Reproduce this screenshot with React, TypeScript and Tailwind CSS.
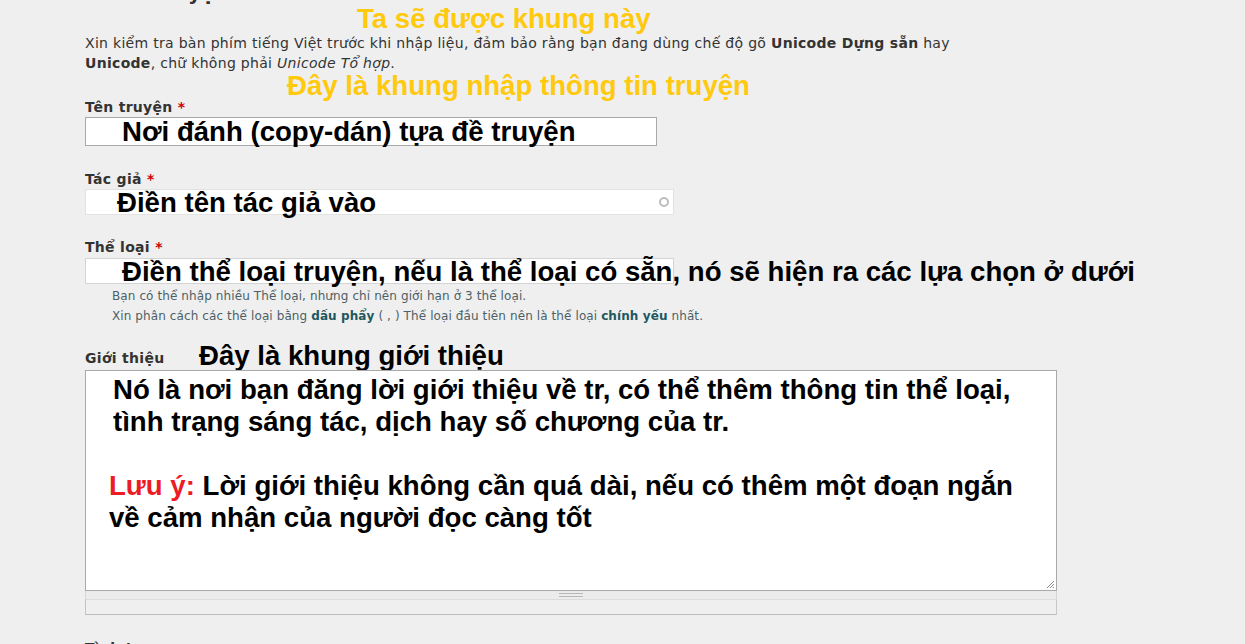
export default function App() {
  const note = "font-['Liberation_Sans',Arial,sans-serif] font-bold text-[27.6px] leading-none";
  const label = "block h-[18px] text-[14px] font-bold leading-[18px] tracking-[0.3px]";

  return (
    <div className="min-h-screen w-full overflow-hidden bg-[#efefef] font-['DejaVu_Sans',Verdana,sans-serif] text-[#333]">
      <div className="w-[1245px] pl-[85px]">
        {/* Tiêu đề bị cắt phía trên */}
        <div className="h-[5px] overflow-hidden">
          <div className="-mt-[19px] text-[20px] font-bold leading-[24px] text-[#333]">Thêm truyện</div>
        </div>

        {/* Chú thích vàng 1 */}
        <div className="flex h-[28px] items-center">
          <span className={`${note} ml-[272px] text-[#ffc90e]`}>Ta sẽ được khung này</span>
        </div>

        {/* Lời dặn */}
        <p className="text-[14px] leading-[20px] tracking-[0.3px] text-[#333]">
          Xin kiểm tra bàn phím tiếng Việt trước khi nhập liệu, đảm bảo rằng bạn đang dùng chế độ gõ{" "}
          <b>Unicode Dựng sẵn</b> hay
          <br />
          <b>Unicode</b>, chữ không phải <i>Unicode Tổ hợp</i>.
        </p>

        {/* Chú thích vàng 2 */}
        <div className="flex h-[25px] items-center">
          <span className={`${note} ml-[202px] text-[#ffc90e]`}>Đây là khung nhập thông tin truyện</span>
        </div>

        {/* Tên truyện */}
        <label className={label}>
          Tên truyện <span className="text-[#cc0000]">*</span>
        </label>
        <div className="mt-[1px] flex h-[29px] w-[572px] items-center border border-[#a9a9a9] bg-white">
          <span className={`${note} ml-[36px] text-black`}>Nơi đánh (copy-dán) tựa đề truyện</span>
        </div>

        {/* Tác giả */}
        <label className={`${label} mt-[24px]`}>
          Tác giả <span className="text-[#cc0000]">*</span>
        </label>
        <div className="mt-[1px] flex h-[26px] w-[589px] items-center justify-between border border-[#e2e2e2] bg-white">
          <span className={`${note} ml-[31px] mt-[2px] text-black`}>Điền tên tác giả vào</span>
          <span className="mr-[4px] h-[10px] w-[10px] rounded-full border-2 border-[#bdbdbd]" />
        </div>

        {/* Thể loại */}
        <label className={`${label} mt-[23px]`}>
          Thể loại <span className="text-[#cc0000]">*</span>
        </label>
        <div className="mt-[2px] flex h-[26px] w-[589px] items-center border border-[#d4d4d4] bg-white">
          <span className={`${note} ml-[36px] mt-[1px] whitespace-nowrap text-black`}>
            Điền thể loại truyện, nếu là thể loại có sẵn, nó sẽ hiện ra các lựa chọn ở dưới
          </span>
        </div>
        <div className="pl-[27px] pt-[2px] text-[12px] leading-[20px] tracking-[0.1px] text-[#4e5f66]">
          <div>Bạn có thể nhập nhiều Thể loại, nhưng chỉ nên giới hạn ở 3 thể loại.</div>
          <div>
            Xin phân cách các thể loại bằng <b className="text-[#21585f]">dấu phẩy</b> ( , ) Thể loại đầu tiên nên là
            thể loại <b className="text-[#21585f]">chính yếu</b> nhất.
          </div>
        </div>

        {/* Giới thiệu */}
        <div className="mt-[17px] flex h-[27px] items-end">
          <label className="w-[114px] pb-[3px] text-[14px] font-bold leading-[18px] tracking-[0.3px]">Giới thiệu</label>
          <span className={`${note} text-black`}>Đây là khung giới thiệu</span>
        </div>
        <div className="relative h-[221px] w-[972px] border border-[#a9a9a9] bg-white pt-[3px] font-['Liberation_Sans',Arial,sans-serif] text-[27.6px] font-bold leading-[32px] text-black">
          <div className="pl-[27px]">
            Nó là nơi bạn đăng lời giới thiệu về tr, có thể thêm thông tin thể loại,
            <br />
            tình trạng sáng tác, dịch hay số chương của tr.
          </div>
          <div className="h-[32px]" />
          <div className="pl-[23px]">
            <span className="text-[#ed1c24]">Lưu ý:</span> Lời giới thiệu không cần quá dài, nếu có thêm một đoạn ngắn
            <br />
            về cảm nhận của người đọc càng tốt
          </div>
          <svg className="absolute bottom-[1px] right-[1px]" width="10" height="10" viewBox="0 0 10 10">
            <path d="M9 2 L2 9 M9 5 L5 9 M9 8 L8 9" stroke="#8a8a8a" strokeWidth="1" />
          </svg>
        </div>
        <div className="flex h-[8px] w-[972px] items-center justify-center border-x border-[#d6d6d6] bg-[#ececec]">
          <div className="h-[4px] w-[24px] border-y border-[#b8b8b8]" />
        </div>
        <div className="h-[16px] w-[972px] border border-t-[#dcdcdc] border-r-[#c8c8c8] border-b-[#bcbcbc] border-l-[#c4c4c4] bg-[#efefef]" />

        {/* Nhãn kế tiếp bị cắt */}
        <label className={`${label} mt-[24px]`}>Tình trạng</label>
      </div>
    </div>
  );
}
